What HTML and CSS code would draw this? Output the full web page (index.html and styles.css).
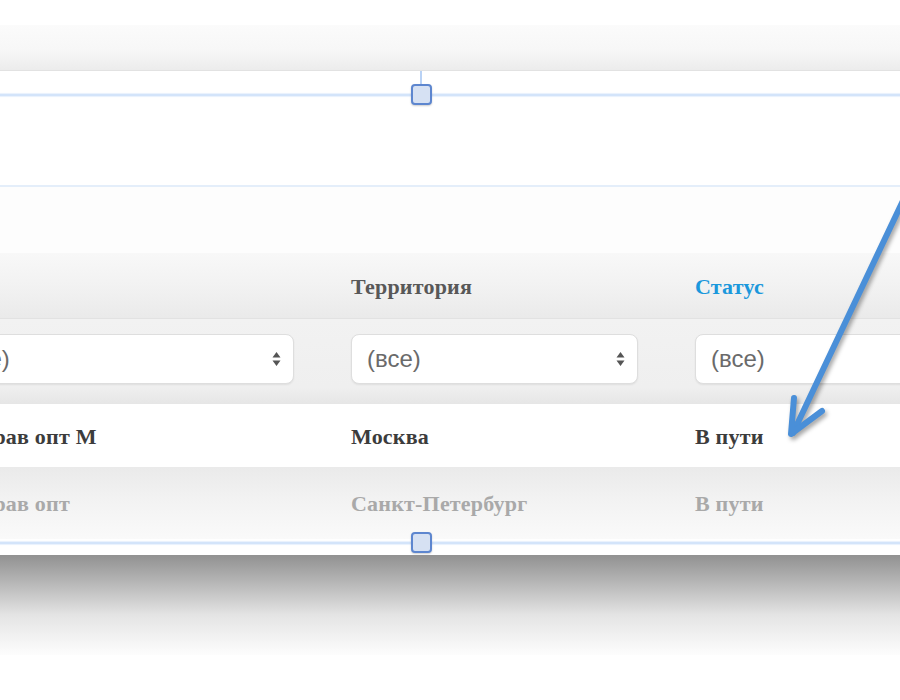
FILE: index.html
```html
<!DOCTYPE html>
<html lang="ru">
<head>
    <meta charset="UTF-8">
    <title>Отгрузки</title>
    <link rel="stylesheet" href="styles.css">
</head>
<body>
    <div class="screen">
        <div class="toolbar"></div>

        <div class="panel">
            <div class="blank blank-top"></div>
            <div class="rule"></div>
            <div class="blank blank-mid"></div>

            <div class="grid">
                <div class="row head">
                    <div class="cell"></div>
                    <div class="cell">Территория</div>
                    <div class="cell active">Статус</div>
                </div>
                <div class="row filters">
                    <div class="cell">
                        <div class="select"><span>(все)</span><svg class="spin" width="9" height="16" viewBox="0 0 9 16"><path d="M4.5 1 L8.5 6.5 H0.5 Z M4.5 15 L8.5 9.5 H0.5 Z"/></svg></div>
                    </div>
                    <div class="cell">
                        <div class="select"><span>(все)</span><svg class="spin" width="9" height="16" viewBox="0 0 9 16"><path d="M4.5 1 L8.5 6.5 H0.5 Z M4.5 15 L8.5 9.5 H0.5 Z"/></svg></div>
                    </div>
                    <div class="cell">
                        <div class="select"><span>(все)</span><svg class="spin" width="9" height="16" viewBox="0 0 9 16"><path d="M4.5 1 L8.5 6.5 H0.5 Z M4.5 15 L8.5 9.5 H0.5 Z"/></svg></div>
                    </div>
                </div>
                <div class="row item">
                    <div class="cell first">Центрав опт М</div>
                    <div class="cell">Москва</div>
                    <div class="cell">В пути</div>
                </div>
                <div class="row item alt">
                    <div class="cell first">Центрав опт</div>
                    <div class="cell">Санкт-Петербург</div>
                    <div class="cell">В пути</div>
                </div>
            </div>

            <!-- selection frame of the edited block -->
            <div class="guide guide-top"></div>
            <div class="guide guide-bottom"></div>
            <div class="tick"></div>
            <div class="handle handle-top"></div>
            <div class="handle handle-bottom"></div>
        </div>

        <div class="shadow"></div>

        <svg class="arrow" width="900" height="700" viewBox="0 0 900 700">
            <g fill="none" stroke="#4a8fd8" stroke-width="6" stroke-linecap="round" stroke-linejoin="round">
                <path d="M908 190 L793 433"/>
                <path d="M794 398 L791 434 L822 411"/>
            </g>
        </svg>
    </div>
</body>
</html>
```

FILE: styles.css
```css
body {
    margin: 0;
    background: #fff;
    overflow: hidden;
}
.screen {
    position: relative;
    width: 900px;
    height: 700px;
    overflow: hidden;
    padding-top: 25px;
    box-sizing: border-box;
}
.toolbar {
    height: 45px;
    background: linear-gradient(#fbfbfb, #f7f7f7 55%, #ececec);
    border-bottom: 1px solid #e2e2e2;
}
.panel {
    position: relative;
    height: 484px;
    background: #fff;
    overflow: hidden;
}
.blank-top {
    height: 114px;
}
.rule {
    height: 2px;
    background: #e4eefa;
}
.blank-mid {
    height: 66px;
    background: #fdfdfd;
}

/* table */
.grid {
    width: 1100px;
    margin-left: -60px;
    font-family: "Liberation Serif", "Times New Roman", serif;
    font-weight: bold;
    font-size: 22px;
    letter-spacing: 0.2px;
}
.row {
    display: grid;
    grid-template-columns: 411px 344px 1fr;
}
.cell {
    display: flex;
    align-items: center;
    white-space: nowrap;
}
.head {
    height: 66px;
    background: linear-gradient(#f8f8f8, #f2f2f2 50%, #eaeaea);
    border-bottom: 1px solid #e2e2e2;
    color: #585858;
    padding-top: 3px;
    box-sizing: border-box;
}
.head .active {
    color: #1b98dc;
}
.filters {
    height: 85px;
    background: linear-gradient(#f2f2f2, #efefef 80%, #e6e6e6);
}
.filters .cell {
    align-items: flex-start;
    padding-top: 15px;
}
.select {
    width: calc(100% - 57px);
    height: 50px;
    box-sizing: border-box;
    background: #fff;
    border: 1px solid #dedede;
    border-radius: 8px;
    box-shadow: 0 1px 2px rgba(0,0,0,0.07);
    display: flex;
    align-items: center;
    justify-content: space-between;
    padding: 0 12px 0 15px;
    font-family: "Liberation Sans", Arial, sans-serif;
    font-weight: normal;
    font-size: 24px;
    letter-spacing: 0;
    color: #6a6a6a;
}
.spin {
    fill: #555;
}
.item {
    height: 63px;
    color: #3c3c3c;
    padding-top: 2px;
    box-sizing: border-box;
}
.item.alt {
    height: 72px;
    background: linear-gradient(#eaeaea, #f3f3f3 50%, #fafafa);
    color: #a9a9a9;
}
.first {
    padding-left: 2px;
}

/* selection frame */
.guide {
    position: absolute;
    left: 0;
    right: 0;
    height: 2px;
    background: #d3e4fa;
    box-shadow: 0 0 1px 1px #e8f1fd;
}
.guide-top {
    top: 23px;
}
.guide-bottom {
    top: 471px;
}
.tick {
    position: absolute;
    left: 420px;
    top: 0;
    width: 2px;
    height: 14px;
    background: #b9d2f5;
}
.handle {
    position: absolute;
    left: 411px;
    width: 17px;
    height: 17px;
    border: 2px solid #5d86cf;
    border-radius: 4px;
    background: #d6e1f3;
    box-shadow: 0 1px 2px rgba(0,0,0,0.2);
}
.handle-top {
    top: 13px;
}
.handle-bottom {
    top: 461px;
}

.shadow {
    height: 100px;
    background: linear-gradient(#919191, #b3b3b3 25%, #e4e4e4 60%, #fdfdfd);
}
.arrow {
    position: absolute;
    left: 0;
    top: 0;
    filter: drop-shadow(2px 3px 2px rgba(0,0,0,0.35));
}
```
